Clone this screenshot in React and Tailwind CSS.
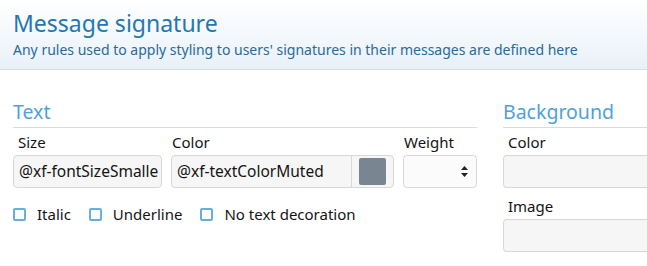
const font = { fontFamily: '"Noto Sans", "Open Sans", sans-serif' }

function Field({ label, children, className = '', pad = 'pl-[5px]' }) {
  return (
    <div className={`flex flex-col ${className}`}>
      <label className={`text-[15px] leading-[20px] ${pad} pt-[4px] pb-[3px] text-[#141414]`}>{label}</label>
      {children}
    </div>
  )
}

function Box({ children, className = '' }) {
  return (
    <div className={`h-[33px] rounded-[4px] border border-[#d8d8d8] bg-[#f6f6f6] flex items-center text-[15.5px] text-[#141414] ${className}`}>
      {children}
    </div>
  )
}

function Check({ label }) {
  return (
    <label className="flex items-center gap-[11px] text-[15px] text-[#141414]">
      <span className="w-[13px] h-[13px] border-2 border-[#6aaedb] rounded-[2px] bg-white" />
      {label}
    </label>
  )
}

export default function App() {
  return (
    <div className="w-[647px] h-[266px] bg-white overflow-hidden" style={font}>
      <div className="h-[70px] border-b border-[#dcdcdc] bg-gradient-to-b from-white to-[#e8f1f9] pl-[13px] pt-[8px]">
        <h1 className="text-[23px] leading-[30px] text-[#2577b1]">Message signature</h1>
        <p className="text-[14px] leading-[18px] mt-[3px] text-[#2b6a99]">Any rules used to apply styling to users' signatures in their messages are defined here</p>
      </div>

      <div className="flex pl-[13px] gap-[26px] pt-[30px]">
        <div className="w-[464px] shrink-0">
          <h2 className="text-[19.5px] leading-[24px] text-[#4ea2da] border-b border-[#dcdcdc] pb-[3px]">Text</h2>
          <div className="flex gap-[9px]">
            <Field label="Size" className="w-[149px]">
              <Box className="px-[5px] overflow-hidden whitespace-nowrap">@xf-fontSizeSmalle</Box>
            </Field>
            <Field label="Color" pad="pl-[1px]" className="w-[223px]">
              <Box className="overflow-hidden">
                <span className="flex-1 px-[5px] whitespace-nowrap">@xf-textColorMuted</span>
                <span className="h-full border-l border-[#d8d8d8] w-[42px] flex items-center justify-center">
                  <span className="w-[27px] h-[27px] rounded-[2px] bg-[#798590]" />
                </span>
              </Box>
            </Field>
            <Field label="Weight" pad="pl-[1px]" className="w-[74px]">
              <Box className="justify-end pr-[8px] bg-[#fbfbfb]">
                <svg width="7" height="11" viewBox="0 0 7 11" className="text-[#222]">
                  <path d="M3.5 0L7 4H0z M3.5 11L0 7h7z" fill="currentColor" />
                </svg>
              </Box>
            </Field>
          </div>
          <div className="flex gap-[18px] mt-[15px]">
            <Check label="Italic" />
            <Check label="Underline" />
            <Check label="No text decoration" />
          </div>
        </div>
        <div className="flex-1">
          <h2 className="text-[19.5px] leading-[24px] text-[#4ea2da] border-b border-[#dcdcdc] pb-[3px]">Background</h2>
          <Field label="Color">
            <Box className="rounded-r-none border-r-0" />
          </Field>
          <Field label="Image" className="mt-[4px]">
            <Box className="rounded-r-none border-r-0" />
          </Field>
        </div>
      </div>
    </div>
  )
}
